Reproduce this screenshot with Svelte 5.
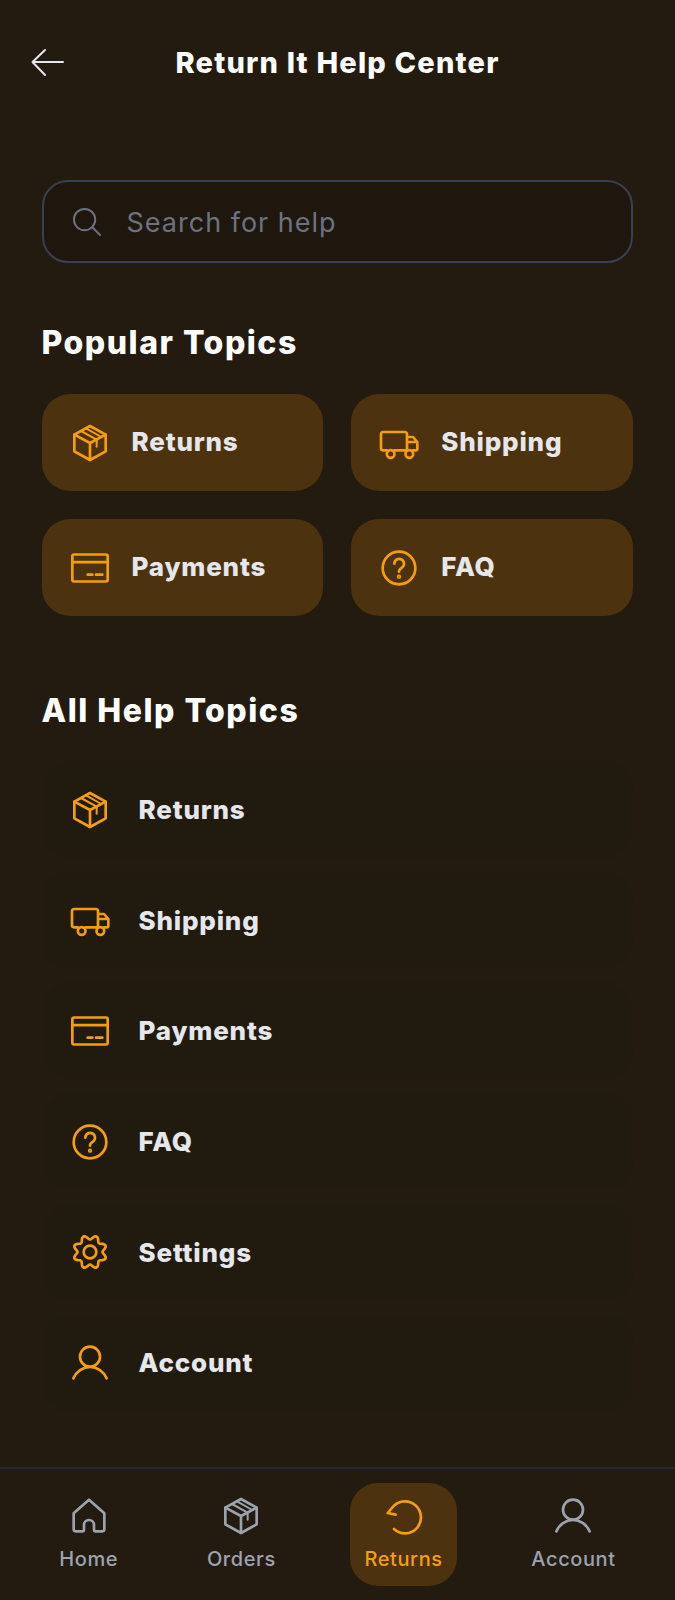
<script>
    const popular = [
        { label: "Returns", icon: "box" },
        { label: "Shipping", icon: "truck" },
        { label: "Payments", icon: "card" },
        { label: "FAQ", icon: "help" },
    ];

    const topics = [
        ...popular,
        { label: "Settings", icon: "gear" },
        { label: "Account", icon: "user" },
    ];

    const tabs = [
        { label: "Home", icon: "home" },
        { label: "Orders", icon: "box" },
        { label: "Returns", icon: "undo", active: true },
        { label: "Account", icon: "user" },
    ];

    // scalloped outline for the settings icon
    function gearPath() {
        const pts = [];
        for (let i = 0; i < 96; i++) {
            const a = (i / 96) * Math.PI * 2;
            const r = 8.8 + 1.3 * Math.cos(a * 8);
            const x = 12 + r * Math.cos(a + Math.PI / 8);
            const y = 12 + r * Math.sin(a + Math.PI / 8);
            pts.push(x.toFixed(2) + " " + y.toFixed(2));
        }
        return "M" + pts.join("L") + "Z";
    }
    const gear = gearPath();
</script>

{#snippet icon(name)}
    <svg class="icon" viewBox="0 0 24 24" fill="none" stroke="currentColor" stroke-width="1.6" stroke-linecap="round" stroke-linejoin="round">
        {#if name === "box"}
            <path d="M12 1.8 21.4 7V17L12 22.2 2.6 17V7Z" />
            <path d="M2.6 7 12 12 21.4 7M12 12V22.2" />
            <path stroke-width="1.2" d="M6.6 4.8 16 10V14.2M9.6 3.2 18.8 8.4" />
        {:else if name === "truck"}
            <path d="M4.8 16.4H2.4A1.2 1.2 0 0 1 1.2 15.2V6.6A1.2 1.2 0 0 1 2.4 5.4H15.6A1.2 1.2 0 0 1 16.8 6.6V16.4M9.2 16.4H16M20.4 16.4H22A1 1 0 0 0 23 15.4V11.4L20.4 8.4H16.8M16.8 11.4H23" />
            <circle cx="7" cy="18.6" r="2.3" />
            <circle cx="18.2" cy="18.6" r="2.3" />
        {:else if name === "card"}
            <rect x="1.4" y="3.9" width="21.2" height="16.2" rx="1" />
            <path d="M1.4 8.5H22.6" />
            <path d="M10.6 16H13.4M15.6 16H19.4" />
        {:else if name === "help"}
            <circle cx="12" cy="12" r="9.8" />
            <path d="M9.2 9.4A2.9 2.9 0 1 1 13.6 11.9C12.6 12.5 12 13 12 14.2" />
            <circle cx="12" cy="17.2" r="0.5" />
        {:else if name === "gear"}
            <path d={gear} />
            <circle cx="12" cy="12" r="3.8" />
        {:else if name === "user"}
            <circle cx="12" cy="8.2" r="6" />
            <path d="M2 21.2C3.8 17.2 7.6 14.4 12 14.4S20.2 17.2 22 21.2" />
        {:else if name === "home"}
            <path d="M12 2.2 21.2 10.4V20A1.2 1.2 0 0 1 20 21.2H16A1 1 0 0 1 15 20.2V17.4A3 3 0 0 0 9 17.4V20.2A1 1 0 0 1 8 21.2H4A1.2 1.2 0 0 1 2.8 20V10.4Z" />
        {:else if name === "undo"}
            <path d="M6 19.8A9.6 9.6 0 1 0 5.6 6.2L2.2 10.2 7 11.2" />
        {/if}
    </svg>
{/snippet}

<div class="page">
    <header class="header">
        <button class="back" aria-label="Back">
            <svg viewBox="0 0 36 30" fill="none" stroke="currentColor" stroke-width="2" stroke-linecap="round" stroke-linejoin="round">
                <path d="M33 15H3M15 3 2.5 15 15 28" />
            </svg>
        </button>
        <h1>Return It Help Center</h1>
        <div></div>
    </header>

    <main class="content">
        <div class="search">
            <svg viewBox="0 0 30 30" fill="none" stroke="currentColor" stroke-width="2" stroke-linecap="round">
                <circle cx="13" cy="13" r="11" />
                <path d="M21 21 29 29" />
            </svg>
            <input type="text" placeholder="Search for help" />
        </div>

        <h2 class="section-title">Popular Topics</h2>
        <div class="popular">
            {#each popular as item}
                <div class="chip">
                    {@render icon(item.icon)}
                    <span>{item.label}</span>
                </div>
            {/each}
        </div>

        <h2 class="section-title second">All Help Topics</h2>
        <div class="topics">
            {#each topics as item}
                <div class="row">
                    {@render icon(item.icon)}
                    <span>{item.label}</span>
                </div>
            {/each}
        </div>
    </main>

    <nav class="nav">
        {#each tabs as tab}
            <div class="tab" class:active={tab.active}>
                {@render icon(tab.icon)}
                <span>{tab.label}</span>
            </div>
        {/each}
    </nav>
</div>

<style>
    :global(body) {
        background: #231b10;
    }

    .page {
        display: flex;
        flex-direction: column;
        height: 1600px;
        background: #231b10;
        font-family: Inter, "Liberation Sans", sans-serif;
        color: #e5e7eb;
    }

    .header {
        display: grid;
        grid-template-columns: 1fr auto 1fr;
        align-items: center;
        height: 124px;
        padding: 0 30px;
        box-sizing: border-box;
    }

    .back {
        width: 36px;
        height: 30px;
        padding: 0;
        background: none;
        border: none;
        color: #e5e7eb;
    }

    .back svg {
        display: block;
        width: 36px;
        height: 30px;
    }

    h1 {
        margin: 0;
        font-size: 29px;
        font-weight: 800;
        letter-spacing: 1.2px;
        color: #fff;
    }

    .content {
        flex: 1;
        padding: 56px 42px 0 41.5px;
    }

    .search {
        display: flex;
        align-items: center;
        gap: 26px;
        height: 83px;
        padding: 0 28px;
        box-sizing: border-box;
        background: #1f170e;
        border: 2px solid #374151;
        border-radius: 26px;
        color: #6b7280;
    }

    .search svg {
        width: 29px;
        height: 29px;
        flex-shrink: 0;
    }

    .search input {
        flex: 1;
        min-width: 0;
        padding: 1px 0 0;
        background: none;
        border: none;
        outline: none;
        font: inherit;
        font-size: 27px;
        letter-spacing: 1px;
        color: #e5e7eb;
    }

    .search input::placeholder {
        color: #6b7280;
        opacity: 1;
    }

    .section-title {
        margin: 61px 0 32px;
        font-size: 32px;
        line-height: 38px;
        font-weight: 800;
        letter-spacing: 1.5px;
        color: #fff;
    }

    .section-title.second {
        margin-top: 76px;
        margin-bottom: 31px;
    }

    .popular {
        display: grid;
        grid-template-columns: 1fr 1fr;
        gap: 28px;
    }

    .chip {
        display: flex;
        align-items: center;
        gap: 22px;
        height: 97px;
        padding: 0 28px;
        box-sizing: border-box;
        background: #4d3210;
        border-radius: 28px;
        font-size: 26px;
        font-weight: 800;
        letter-spacing: 0.8px;
    }

    .chip span {
        padding-bottom: 2px;
    }

    .topics {
        display: flex;
        flex-direction: column;
        gap: 13.7px;
    }

    .row {
        display: flex;
        align-items: center;
        gap: 29px;
        height: 97px;
        padding: 0 28px;
        box-sizing: border-box;
        background: #211a0f;
        border-radius: 28px;
        font-size: 26px;
        font-weight: 800;
        letter-spacing: 0.8px;
    }

    .icon {
        display: block;
        width: 40px;
        height: 40px;
        flex-shrink: 0;
        color: #f59e0b;
    }

    .nav {
        display: flex;
        justify-content: space-around;
        height: 133px;
        padding: 14px 15px;
        box-sizing: border-box;
        border-top: 2px solid #1f2937;
    }

    .tab {
        display: flex;
        flex-direction: column;
        align-items: center;
        justify-content: center;
        gap: 11px;
        padding: 0 14px 2px;
        border-radius: 28px;
        font-size: 20px;
        font-weight: 500;
        letter-spacing: 0.6px;
        color: #9ca3af;
    }

    .tab .icon {
        color: #9ca3af;
    }

    .tab.active {
        background: #4d3210;
        color: #f59e0b;
    }

    .tab.active .icon {
        color: #f59e0b;
    }
</style>
